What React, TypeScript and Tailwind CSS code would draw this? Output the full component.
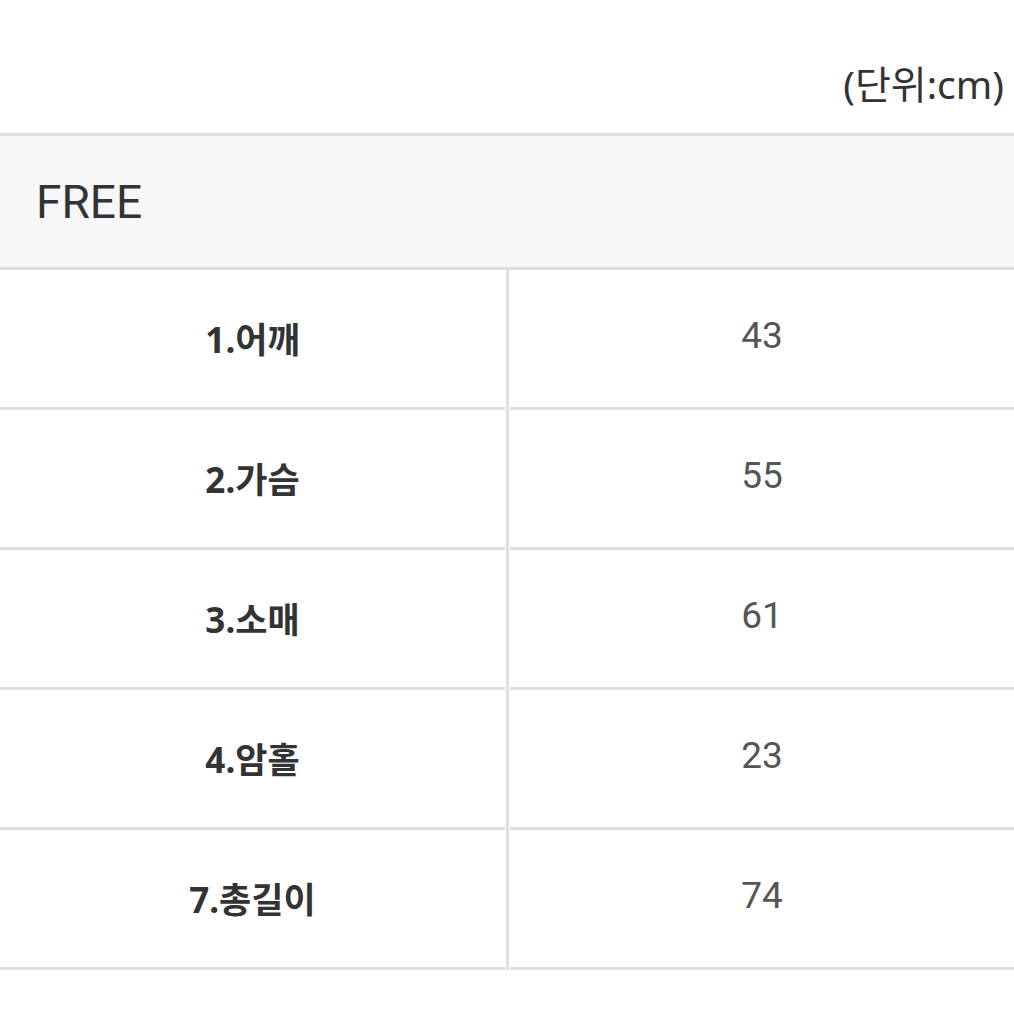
const ROWS: { label: string; value: string }[] = [
  { label: '1.어깨', value: '43' },
  { label: '2.가슴', value: '55' },
  { label: '3.소매', value: '61' },
  { label: '4.암홀', value: '23' },
  { label: '7.총길이', value: '74' },
];

export default function App() {
  return (
    <div className="w-[1014px] h-[1014px] bg-white overflow-hidden font-['Noto_Sans','Noto_Sans_CJK_KR',sans-serif]">
      <div className="h-[133px] flex items-start justify-end pr-[10px] pt-[56px]">
        <span className="text-[39px] leading-[56px] text-[#333]">(단위:cm)</span>
      </div>
      <div className="h-[137px] bg-[#f7f7f9] border-y-[3px] border-[#dedede] flex items-center pl-[36px]">
        <span className="text-[46px] leading-none text-[#333] font-['Roboto','Noto_Sans_CJK_KR',sans-serif]">FREE</span>
      </div>
      {ROWS.map(r => (
        <div key={r.label} className="flex h-[140px]">
          <div className="w-[505px] border-b-[3px] border-[#dedede] flex items-center justify-center">
            <span className="text-[35px] font-bold text-[#333] leading-none pt-[2px]">{r.label}</span>
          </div>
          <div className="w-[5px] flex justify-center">
            <div className="w-[3px] bg-[#dedede]" />
          </div>
          <div className="flex-1 border-b-[3px] border-[#dedede] flex items-center justify-center">
            <span className="text-[37px] text-[#555] leading-none pb-[6px] font-['Roboto','Noto_Sans_CJK_KR',sans-serif]">{r.value}</span>
          </div>
        </div>
      ))}
    </div>
  );
}
